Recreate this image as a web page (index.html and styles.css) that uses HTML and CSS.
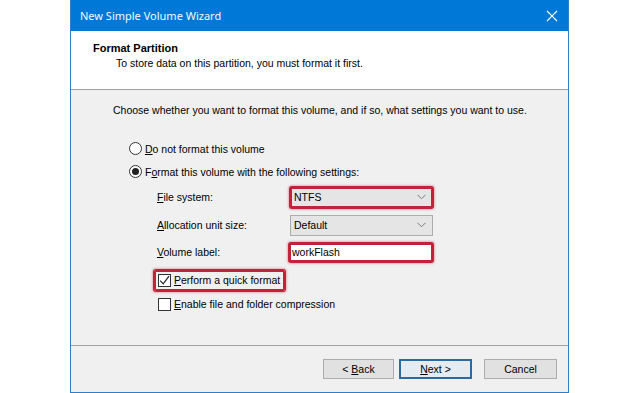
FILE: index.html
```html
<!DOCTYPE html>
<html>
<head>
<meta charset="utf-8">
<link rel="stylesheet" href="styles.css">
</head>
<body>
<div class="window">
  <div class="titlebar">
    <span class="title">New Simple Volume Wizard</span>
    <svg class="close" width="12" height="12" viewBox="0 0 12 12"><path d="M1 1 L11 11 M11 1 L1 11" stroke="#ffffff" stroke-width="1.1" fill="none"/></svg>
  </div>
  <div class="header">
    <div class="h-title">Format Partition</div>
    <div class="h-sub">To store data on this partition, you must format it first.</div>
  </div>
  <div class="content">
    <div class="intro">Choose whether you want to format this volume, and if so, what settings you want to use.</div>
    <div class="radio-row r1"><span class="radio"></span><span><u>D</u>o not format this volume</span></div>
    <div class="radio-row"><span class="radio checked"></span><span>F<u>o</u>rmat this volume with the following settings:</span></div>
    <div class="settings">
      <div class="s-label"><u>F</u>ile system:</div>
      <div class="combo hl"><span>NTFS</span><svg class="chev" width="9" height="6" viewBox="0 0 9 6"><path d="M0.5 0.8 L4.5 4.8 L8.5 0.8" stroke="#7a7a7a" stroke-width="1" fill="none"/></svg></div>
      <div class="s-label"><u>A</u>llocation unit size:</div>
      <div class="combo"><span>Default</span><svg class="chev" width="9" height="6" viewBox="0 0 9 6"><path d="M0.5 0.8 L4.5 4.8 L8.5 0.8" stroke="#7a7a7a" stroke-width="1" fill="none"/></svg></div>
      <div class="s-label"><u>V</u>olume label:</div>
      <div class="textbox hl">workFlash</div>
    </div>
    <div class="check-row first"><span class="check-wrap hl"><span class="checkbox"><svg width="11" height="11" viewBox="0 0 11 11"><path d="M1.2 5.6 L4.2 8.8 L10 1.2" stroke="#222" stroke-width="1.2" fill="none"/></svg></span><span><u>P</u>erform a quick format</span></span></div>
    <div class="check-row"><span class="check-wrap"><span class="checkbox"></span><span><u>E</u>nable file and folder compression</span></span></div>
  </div>
  <div class="footer">
    <button class="btn back">&lt; <u>B</u>ack</button>
    <button class="btn default"><u>N</u>ext &gt;</button>
    <button class="btn cancel">Cancel</button>
  </div>
</div>
</body>
</html>
```
FILE: styles.css
```css
html, body {
  margin: 0;
  padding: 0;
  background: #ffffff;
}
body {
  font-family: "Liberation Sans", Arial, sans-serif;
  font-size: 10.5px;
  color: #000;
  width: 640px;
  height: 393px;
  overflow: hidden;
}
.window {
  margin-left: 70px;
  width: 499px;
  height: 393px;
  box-sizing: border-box;
  border-left: 1px solid #2f7fc8;
  border-right: 1px solid #2f7fc8;
  border-bottom: 1px solid #2f7fc8;
  display: flex;
  flex-direction: column;
  background: #f0f0f0;
}
.titlebar {
  height: 31px;
  background: #0078d7;
  display: flex;
  align-items: center;
  justify-content: space-between;
  padding: 0 10px 0 9px;
  flex: none;
}
.title {
  font-family: "Noto Sans", "Open Sans", sans-serif;
  font-size: 11px;
  color: #f4f8fc;
}
.header {
  height: 59px;
  background: #ffffff;
  border-bottom: 1px solid #a0a0a0;
  box-sizing: border-box;
  padding: 10px 0 0 22px;
  flex: none;
}
.h-title {
  font-weight: bold;
  font-size: 11px;
  line-height: 14px;
  height: 14px;
}
.h-sub {
  line-height: 14px;
  margin-top: 1px;
  padding-left: 23px;
}
.content {
  flex: 1;
  padding: 13px 0 0 0;
  border-bottom: 1px solid #a0a0a0;
}
.intro {
  line-height: 14px;
  padding-left: 42px;
  white-space: nowrap;
}
.radio-row {
  height: 23px;
  display: flex;
  align-items: center;
  padding-left: 58px;
  gap: 3px;
}
.radio-row.r1 {
  margin-top: 20px;
}
.radio {
  width: 11px;
  height: 11px;
  border: 1px solid #333;
  border-radius: 50%;
  background: #fff;
  position: relative;
  flex: none;
}
.radio.checked::after {
  content: "";
  position: absolute;
  left: 2px;
  top: 2px;
  width: 7px;
  height: 7px;
  border-radius: 50%;
  background: #222;
}
.settings {
  display: grid;
  grid-template-columns: 133px 143px;
  grid-template-rows: 28px 28px 26px;
  align-items: center;
  padding-left: 86px;
}
.s-label {
  line-height: 14px;
}
.combo {
  height: 21px;
  box-sizing: border-box;
  border: 1px solid #adadad;
  background: #e5e5e5;
  display: flex;
  align-items: center;
  justify-content: space-between;
  padding: 0 6px 0 3px;
}
.textbox {
  height: 19px;
  box-sizing: border-box;
  border: 1px solid #7a7a7a;
  background: #fff;
  line-height: 15px;
  padding-left: 1px;
  margin-left: -1px;
  width: 144px;
}
.hl {
  border-color: #c4213a;
  border-width: 2px;
  border-radius: 2px;
  box-shadow: 0 0 0 1px #c4213a, 0 0 2px 2px rgba(196, 33, 58, 0.3);
}
.combo.hl {
  padding-left: 2px;
  padding-right: 5px;
}
.check-row {
  height: 24px;
  display: flex;
  align-items: center;
  padding-left: 86px;
}
.check-row.first {
  margin-top: 3px;
}
.check-wrap {
  display: flex;
  align-items: center;
  gap: 3px;
  height: 21px;
  padding: 0 3px 0 2px;
  box-sizing: border-box;
  border: 2px solid transparent;
  margin-left: -3px;
}
.check-wrap.hl {
  border-color: #c4213a;
}
.checkbox {
  width: 11px;
  height: 11px;
  border: 1px solid #333;
  background: #fff;
  display: flex;
  align-items: center;
  justify-content: center;
  flex: none;
}
.footer {
  height: 46px;
  display: flex;
  justify-content: flex-end;
  align-items: flex-start;
  padding: 13px 11px 0 0;
  box-sizing: border-box;
  flex: none;
}
.btn {
  width: 73px;
  height: 20px;
  box-sizing: border-box;
  border: 1px solid #adadad;
  background: #e1e1e1;
  font-family: "Liberation Sans", Arial, sans-serif;
  font-size: 10.5px;
  color: #000;
  padding: 0;
  margin: 0;
  line-height: 18px;
}
.btn.back {
  width: 71px;
}
.btn.default {
  border: 2px solid #2b6aa3;
  background: #e4ebf1;
  margin-left: 5px;
  line-height: 16px;
}
.btn.cancel {
  margin-left: 12px;
}
```
